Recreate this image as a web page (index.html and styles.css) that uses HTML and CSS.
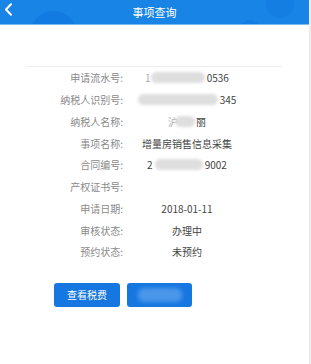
FILE: index.html
```html
<!DOCTYPE html>
<html lang="zh">
<head>
<meta charset="utf-8">
<link rel="stylesheet" href="styles.css">
</head>
<body>
<div class="page">
  <header class="topbar">
    <span class="deco deco-a"></span>
    <span class="deco deco-b"></span>
    <span class="deco deco-c"></span>
    <svg class="back" width="9" height="13" viewBox="0 0 9 13"><path d="M7 1.2 L2 6.5 L7 11.8" fill="none" stroke="#fff" stroke-width="2" stroke-linecap="round" stroke-linejoin="round"/></svg>
    <h1 class="title">事项查询</h1>
  </header>
  <main class="content">
    <div class="info">
      <div class="label">申请流水号:</div>
      <div class="value"><span class="dim">1</span><span class="blur b1"></span><span>0536</span></div>
      <div class="label">纳税人识别号:</div>
      <div class="value"><span class="blur b2"></span><span>345</span></div>
      <div class="label">纳税人名称:</div>
      <div class="value"><span class="dim">沪</span><span class="blur b3"></span><span>丽</span></div>
      <div class="label">事项名称:</div>
      <div class="value">增量房销售信息采集</div>
      <div class="label">合同编号:</div>
      <div class="value"><span>2</span><span class="blur b4"></span><span>9002</span></div>
      <div class="label">产权证书号:</div>
      <div class="value"></div>
      <div class="label">申请日期:</div>
      <div class="value">2018-01-11</div>
      <div class="label">审核状态:</div>
      <div class="value">办理中</div>
      <div class="label">预约状态:</div>
      <div class="value">未预约</div>
    </div>
    <div class="actions">
      <button class="btn">查看税费</button>
      <button class="btn btn-blur"><span class="blur-btn"></span></button>
    </div>
  </main>
</div>
</body>
</html>
```
FILE: styles.css
```css
html, body {
  margin: 0;
  padding: 0;
  background: #fff;
}
body {
  font-family: "Noto Sans CJK SC", "Noto Sans", sans-serif;
}
.page {
  width: 309px;
  height: 364px;
  border-right: 2px solid #ececec;
  background: #fff;
}
.topbar {
  position: relative;
  height: 24px;
  background: #1784e6;
  border-bottom: 1px solid #7cbcf0;
  display: flex;
  align-items: center;
  justify-content: center;
  overflow: hidden;
}
.deco {
  position: absolute;
  border-radius: 50%;
  background: #0f74de;
  opacity: 0.55;
}
.deco-a { left: 30px; top: 11px; width: 47px; height: 47px; }
.deco-b { left: 266px; top: -10px; width: 28px; height: 28px; opacity: 0.35; }
.deco-c { left: 240px; top: 20px; width: 20px; height: 20px; opacity: 0.5; }
.back {
  position: absolute;
  left: 4px;
  top: 3px;
}
.title {
  position: relative;
  margin: 0;
  font-size: 11px;
  font-weight: normal;
  color: #fff;
  line-height: 24px;
}
.content {
  padding: 0 27px;
}
.info {
  margin-top: 41px;
  border-top: 1px solid #ededed;
  display: grid;
  grid-template-columns: 96px 112px;
  column-gap: 8px;
  grid-auto-rows: 21.75px;
  align-items: center;
  font-size: 10px;
}
.label {
  text-align: right;
  color: #8a8a8a;
}
.value {
  text-align: center;
  color: #444;
  display: flex;
  justify-content: center;
  align-items: center;
  white-space: nowrap;
}
.dim {
  color: #aaa;
}
.blur {
  display: inline-block;
  height: 11px;
  background: #dedede;
  border-radius: 6px;
  filter: blur(1.5px);
}
.b1 { width: 54px; margin: 0 2px 0 0; }
.b2 { width: 80px; margin-right: 2px; }
.b3 { width: 20px; margin: 0 1px 0 -3px; }
.b4 { width: 48px; margin: 0 2px; }
.actions {
  margin-top: 20px;
  padding-left: 27px;
  display: flex;
  gap: 7px;
}
.btn {
  width: 66px;
  height: 24px;
  border: none;
  border-radius: 3px;
  background: #1677e0;
  color: #fff;
  font-family: inherit;
  font-size: 10px;
  padding: 0;
  display: flex;
  align-items: center;
  justify-content: center;
}
.btn-blur {
  width: 65px;
}
.blur-btn {
  display: inline-block;
  width: 44px;
  height: 14px;
  background: #4a97ea;
  border-radius: 6px;
  filter: blur(2px);
}
```
